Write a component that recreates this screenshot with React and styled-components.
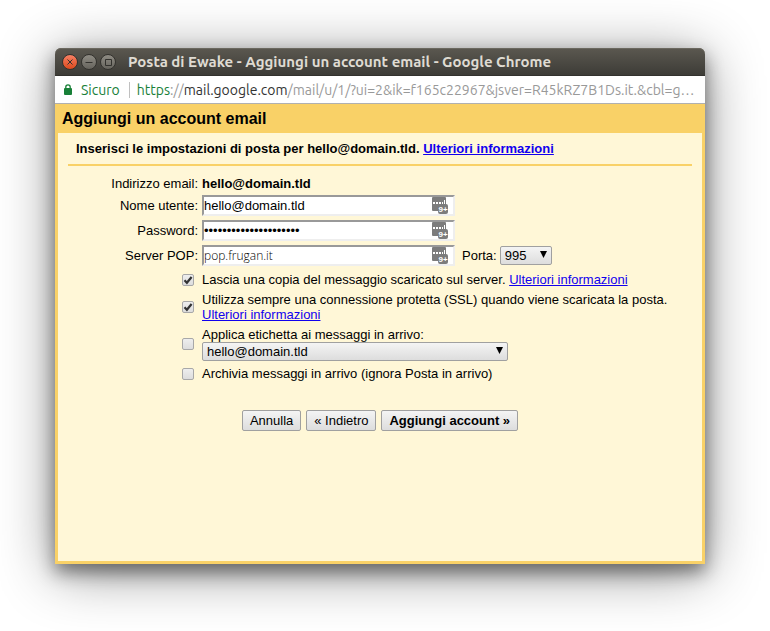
import React, { useState } from 'react'
import styled, { createGlobalStyle } from 'styled-components'

const GlobalStyle = createGlobalStyle`

    * {
        box-sizing: border-box;
    }

    body {
        margin: 0;
        background: #ffffff;
        color: #000000;
        font-family: "Liberation Sans", Arial, sans-serif;
        font-size: 13px;
        line-height: 15px;
    }

`

const Desktop = styled.div`

    display: flex;
    min-height: 100vh;
    padding: 48px 65px 67px 55px;

`

const Window = styled.div`

    flex: 1;
    min-width: 0;
    display: flex;
    flex-direction: column;
    border-radius: 6px 6px 0 0;
    box-shadow: 0 8px 18px rgba(0, 0, 0, 0.45), 0 8px 56px rgba(0, 0, 0, 0.45);

`

const TitleBar = styled.header`

    display: flex;
    align-items: center;
    gap: 3px;
    height: 28px;
    padding: 0 7px;
    border-radius: 6px 6px 0 0;
    background: linear-gradient(#5b5850, #3d3c37);
    border-bottom: 1px solid #33322e;
    box-shadow: inset 0 1px #6b685f;

`

const WindowButton = styled.button`

    display: flex;
    flex: none;
    width: 16px;
    height: 16px;
    padding: 0;
    border: 1px solid #33322e;
    border-radius: 50%;
    background: ${props => props.$close ? 'linear-gradient(#f68064, #dd4a1d)' : 'linear-gradient(#8f8c84, #66645d)'};

    svg {
        width: 14px;
        height: 14px;
        fill: none;
        stroke: #33322e;
    }

`

const WindowTitle = styled.div`

    margin-left: 9px;
    color: #dfdbd2;
    font-family: Ubuntu, "Noto Sans", sans-serif;
    font-size: 15px;
    font-weight: 700;
    line-height: 20px;
    white-space: nowrap;

`

const AddressBar = styled.div`

    display: flex;
    align-items: center;
    height: 28px;
    padding: 0 5px 0 8px;
    background: #ffffff;
    border-bottom: 1px solid #b0b0b0;
    font-family: Ubuntu, "Noto Sans", sans-serif;
    font-size: 14px;
    line-height: 20px;
    color: #188038;

    svg {
        flex: none;
    }

`

const Secure = styled.span`

    margin-left: 8px;
    padding-right: 9px;

`

const Url = styled.span`

    flex: 1;
    min-width: 0;
    overflow: hidden;
    padding-left: 7px;
    white-space: nowrap;
    text-overflow: ellipsis;
    color: #999999;

`

const Divider = styled.span`

    width: 1px;
    height: 16px;
    background: #c0c0c0;

`

const Scheme = styled.span`

    color: #188038;

`

const Host = styled.span`

    color: #333333;

`

const Page = styled.main`

    flex: 1;
    display: flex;
    flex-direction: column;
    padding: 0 3px 3px;
    background: #f9d167;

`

const PageTitle = styled.h1`

    margin: 0;
    padding: 5px 4px 4px;
    font-size: 16px;
    line-height: 20px;

`

const Panel = styled.form`

    flex: 1;
    padding: 8px 10px;
    background: #fff7d7;

`

const Intro = styled.p`

    margin: 0;
    padding: 0 8px 8px;
    border-bottom: 2px solid #f9d167;
    font-weight: 700;

`

const Link = styled.a`

    color: #1100ee;

`

const Fields = styled.div`

    display: grid;
    grid-template-columns: 130px 1fr;
    align-items: center;
    gap: 4px;
    padding-top: 10px;

`

const FieldLabel = styled.label`

    text-align: right;

`

const FieldRow = styled.div`

    display: flex;
    align-items: center;
    gap: 3px;

`

const InputBox = styled.div`

    position: relative;
    width: 253px;
    margin-right: 4px;

`

const Input = styled.input`

    display: block;
    width: 100%;
    height: 21px;
    padding: 0;
    border: 2px solid;
    border-color: #999999 #eeeeee #eeeeee #999999;
    background: #ffffff;
    color: #000000;
    font-family: ${props => props.$light ? '"Open Sans", sans-serif' : '"Liberation Sans", Arial, sans-serif'};
    font-weight: ${props => props.$light ? 300 : 400};
    font-size: ${props => props.$light ? '12px' : '13px'};

`

const Badge = styled.svg`

    position: absolute;
    top: 2px;
    right: 6px;

`

const Select = styled.select`

    appearance: none;
    height: 19px;
    width: ${props => props.$wide ? '306px' : '52px'};
    padding: 0 4px;
    border: 1px solid #a0a0a0;
    border-radius: 2px;
    background: linear-gradient(#f4f4f4, #dddddd);
    color: #000000;
    font-family: inherit;
    font-size: 13px;

`

const SelectBox = styled.div`

    position: relative;
    display: flex;
    width: max-content;

    svg {
        position: absolute;
        top: 5px;
        right: 5px;
        pointer-events: none;
    }

`

const Options = styled.div`

    display: grid;
    gap: 5px;
    padding: 6px 0 0 114px;

`

const Option = styled.div`

    display: flex;
    align-items: center;
    gap: 8px;

`

const Checkbox = styled.input`

    appearance: none;
    flex: none;
    width: 12px;
    height: 12px;
    margin: 0;
    border: 1px solid #a8a8a8;
    border-radius: 2px;
    background: linear-gradient(#eeeeee, #dddddd);

`

const CheckBoxWrap = styled.span`

    position: relative;
    display: flex;

    svg {
        position: absolute;
        top: 0;
        left: 0;
        pointer-events: none;
    }

`

const Actions = styled.div`

    display: flex;
    justify-content: center;
    gap: 5px;
    padding-top: 29px;

`

const Button = styled.button`

    height: 21px;
    padding: 0 7px;
    border: 1px solid #a0a0a0;
    border-radius: 2px;
    background: linear-gradient(#f4f4f4, #dddddd);
    color: #000000;
    font-family: inherit;
    font-size: 13px;
    font-weight: ${props => props.$primary ? 700 : 400};

`

const PasswordBadge = () => (
    <Badge width="17" height="18" viewBox="0 0 17 18" aria-hidden="true">
        <rect width="14" height="14" rx="1" fill="#7c7c7c"/>
        <path d="M1 5h2v2H1zM4 5h2v2H4zM7 5h2v2H7zM10 5h1v2h-1zM12 3h1v4h-1z" fill="#ffffff"/>
        <rect x="6" y="7" width="10" height="10" rx="2" fill="#7c7c7c"/>
        <text x="6.5" y="15" fontFamily="Liberation Sans" fontWeight="700" fontSize="8" fill="#ffffff">9+</text>
    </Badge>
)

const Field = ({ id, label, children, ...rest }) => (
    <>
        <FieldLabel htmlFor={id}>{label}</FieldLabel>
        <FieldRow>
            <InputBox>
                <Input id={id} {...rest}/>
                <PasswordBadge/>
            </InputBox>
            {children}
        </FieldRow>
    </>
)

const Dropdown = ({ value, ...rest }) => (
    <SelectBox>
        <Select defaultValue={value} {...rest}>
            <option>{value}</option>
        </Select>
        <svg width="7" height="7" viewBox="0 0 7 7" aria-hidden="true"><path d="M0 0h7L3.5 7z"/></svg>
    </SelectBox>
)

const Check = ({ id, initial }) => {
    const [checked, setChecked] = useState(Boolean(initial))

    return (
        <CheckBoxWrap>
            <Checkbox id={id} type="checkbox" checked={checked} onChange={() => setChecked(!checked)}/>
            {checked &&
                <svg width="12" height="12" viewBox="0 0 12 12" aria-hidden="true">
                    <path d="M2.5 6.2l2.4 2.6L9.6 3" fill="none" stroke="#333333" strokeWidth="2.2"/>
                </svg>}
        </CheckBoxWrap>
    )
}

const App = () => (
    <Desktop>
        <GlobalStyle/>
        <Window>

            <TitleBar>
                <WindowButton $close aria-label="Chiudi">
                    <svg viewBox="0 0 14 14"><path d="M4.5 4.5l5 5M9.5 4.5l-5 5"/></svg>
                </WindowButton>
                <WindowButton aria-label="Riduci">
                    <svg viewBox="0 0 14 14"><path d="M3.5 7.5h7"/></svg>
                </WindowButton>
                <WindowButton aria-label="Ingrandisci">
                    <svg viewBox="0 0 14 14"><path d="M4.5 4.5h6v6h-6z"/></svg>
                </WindowButton>
                <WindowTitle>Posta di Ewake - Aggiungi un account email - Google Chrome</WindowTitle>
            </TitleBar>

            <AddressBar>
                <svg width="10" height="12" viewBox="0 0 10 12" aria-hidden="true">
                    <rect x="1" y="4" width="8" height="7" rx="1" fill="#188038"/>
                    <path d="M2.8 5V3a2.2 2.2 0 0 1 4.4 0v2" fill="none" stroke="#188038" strokeWidth="1.3"/>
                </svg>
                <Secure>Sicuro</Secure>
                <Divider/>
                <Url>
                    <Scheme>https</Scheme>://<Host>mail.google.com</Host>/mail/u/1/?ui=2&amp;ik=f165c22967&amp;jsver=R45kRZ7B1Ds.it.&amp;cbl=g…
                </Url>
            </AddressBar>

            <Page>
                <PageTitle>Aggiungi un account email</PageTitle>
                <Panel onSubmit={event => event.preventDefault()}>
                    <Intro>
                        Inserisci le impostazioni di posta per hello@domain.tld. <Link href="#info">Ulteriori informazioni</Link>
                    </Intro>

                    <Fields>
                        <FieldLabel as="span">Indirizzo email:</FieldLabel>
                        <b>hello@domain.tld</b>
                        <Field id="user" label="Nome utente:" defaultValue="hello@domain.tld"/>
                        <Field id="password" label="Password:" type="password" defaultValue="123456789012345678901"/>
                        <Field id="server" label="Server POP:" $light defaultValue="pop.frugan.it">
                            <label htmlFor="port">Porta:</label>
                            <Dropdown id="port" value="995"/>
                        </Field>
                    </Fields>

                    <Options>
                        <Option>
                            <Check id="copy" initial/>
                            <span>
                                <label htmlFor="copy">Lascia una copia del messaggio scaricato sul server.</label> <Link href="#copy-info">Ulteriori informazioni</Link>
                            </span>
                        </Option>
                        <Option>
                            <Check id="ssl" initial/>
                            <span>
                                <label htmlFor="ssl">Utilizza sempre una connessione protetta (SSL) quando viene scaricata la posta.</label>
                                <br/>
                                <Link href="#ssl-info">Ulteriori informazioni</Link>
                            </span>
                        </Option>
                        <Option>
                            <Check id="tag"/>
                            <div>
                                <label htmlFor="tag">Applica etichetta ai messaggi in arrivo:</label>
                                <Dropdown $wide aria-label="Etichetta" value="hello@domain.tld"/>
                            </div>
                        </Option>
                        <Option>
                            <Check id="archive"/>
                            <label htmlFor="archive">Archivia messaggi in arrivo (ignora Posta in arrivo)</label>
                        </Option>
                    </Options>

                    <Actions>
                        <Button type="button">Annulla</Button>
                        <Button type="button">« Indietro</Button>
                        <Button $primary>Aggiungi account »</Button>
                    </Actions>
                </Panel>
            </Page>

        </Window>
    </Desktop>
)

export default App
